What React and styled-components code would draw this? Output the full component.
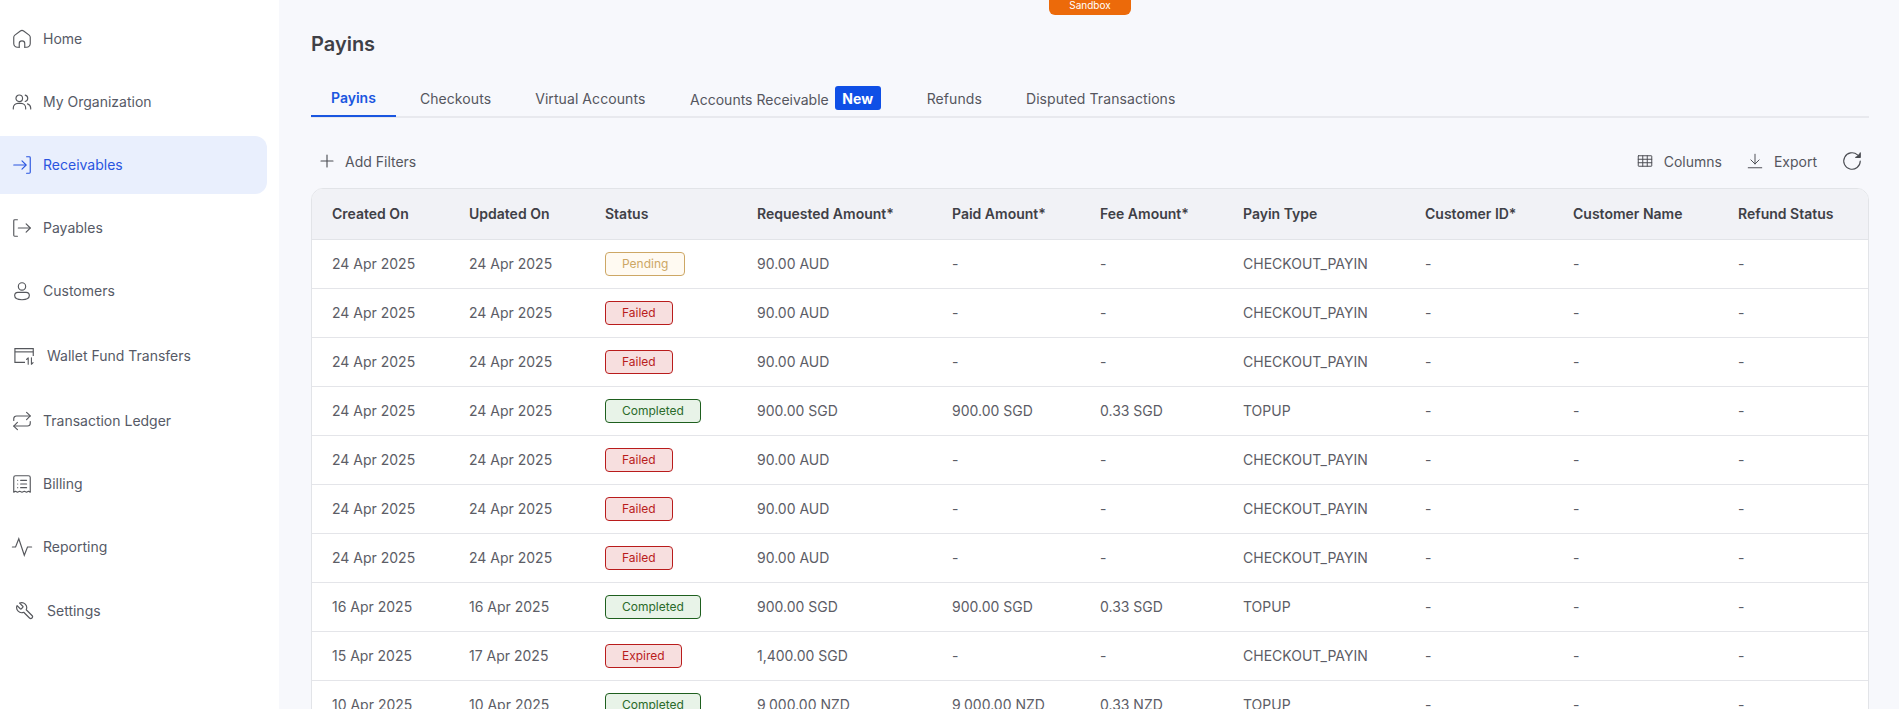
import React from "react";
import styled, { createGlobalStyle } from "styled-components";

const GlobalStyle = createGlobalStyle`
  html, body {
    margin: 0;
    padding: 0;
    height: 100%;
    overflow: hidden;
    font-family: "Inter", "Liberation Sans", sans-serif;
    background: #f7f8fc;
  }
  * {
    box-sizing: border-box;
  }
`;

const Layout = styled.div`
  display: flex;
  height: 100vh;
  overflow: hidden;
`;

const Sidebar = styled.aside`
  width: 279px;
  flex-shrink: 0;
  background: #ffffff;
  padding: 10px 12px 0 0;
  display: flex;
  flex-direction: column;
  gap: 5px;
`;

const NavItem = styled.div`
  height: ${(props) => props.$height || 58}px;
  display: flex;
  align-items: center;
  gap: ${(props) => props.$gap || 10}px;
  padding: 0 0 1px ${(props) => props.$pad || 11}px;
  font-size: 14px;
  color: ${(props) => (props.$active ? "#2a55e0" : "#565a66")};
  background: ${(props) => (props.$active ? "#e9effd" : "transparent")};
  border-radius: ${(props) => (props.$active ? "0 12px 12px 0" : "0")};
  svg {
    flex-shrink: 0;
    color: ${(props) => (props.$active ? "#2a55e0" : "#55575c")};
  }
`;

const Main = styled.main`
  flex: 1;
  min-width: 0;
  padding: 0 30px 0 32px;
  position: relative;
`;

const SandboxTag = styled.div`
  position: absolute;
  top: 0;
  left: 770px;
  width: 82px;
  height: 15px;
  background: #ec6a0a;
  color: #ffffff;
  font-size: 10px;
  line-height: 10px;
  text-align: center;
  border-radius: 0 0 6px 6px;
`;

const Title = styled.h1`
  margin: 0;
  padding-top: 32px;
  font-size: 20px;
  line-height: 24px;
  font-weight: 600;
  color: #3f4046;
`;

const Tabs = styled.div`
  display: flex;
  align-items: center;
  height: 38px;
  margin-top: 24px;
  border-bottom: 2px solid #e8e9ee;
`;

const Tab = styled.div`
  height: 38px;
  display: flex;
  align-items: center;
  padding: ${(props) => (props.$active ? "0" : "2px")} 20px 0;
  margin-right: ${(props) => props.$gap || 0}px;
  font-size: 14px;
  letter-spacing: ${(props) => (props.$active ? "0" : "0.08px")};
  font-weight: ${(props) => (props.$active ? 600 : 400)};
  color: ${(props) => (props.$active ? "#1a56e0" : "#55565e")};
  border-bottom: 2px solid ${(props) => (props.$active ? "#1a56e0" : "transparent")};
`;

const TabLabel = styled.span`
  padding-top: 2px;
  letter-spacing: 0;
`;

const NewBadge = styled.span`
  height: 24px;
  width: 46px;
  margin-left: 6px;
  display: flex;
  align-items: center;
  justify-content: center;
  background: #0f4fe6;
  color: #ffffff;
  font-size: 14px;
  font-weight: 700;
  letter-spacing: 0;
  border-radius: 3px;
`;

const Toolbar = styled.div`
  display: flex;
  align-items: center;
  justify-content: space-between;
  height: 70px;
  padding-top: 16px;
`;

const ToolGroup = styled.div`
  display: flex;
  align-items: center;
  gap: 24px;
`;

const ToolButton = styled.div`
  display: flex;
  align-items: center;
  gap: ${(props) => props.$gap || 10}px;
  font-size: 14px;
  color: #55565e;
  margin-left: ${(props) => props.$left || 0}px;
  margin-right: ${(props) => props.$right || 0}px;
  svg {
    color: #4a4c52;
  }
`;

const Card = styled.div`
  border: 1px solid #e2e4e8;
  border-radius: 12px 12px 0 0;
  overflow: hidden;
  background: #ffffff;
`;

const Table = styled.table`
  width: 100%;
  table-layout: fixed;
  border-collapse: collapse;
`;

const HeadCell = styled.th`
  height: 50px;
  padding: 0 0 0 20px;
  background: #f1f2f6;
  border-bottom: 1px solid #e2e4e8;
  font-size: 14px;
  font-weight: 600;
  color: #3f4046;
  text-align: left;
  white-space: nowrap;
`;

const Cell = styled.td`
  height: 49px;
  padding: 0 0 0 20px;
  border-bottom: 1px solid #e4e5e9;
  font-size: 14px;
  color: #5c5d66;
  white-space: nowrap;
`;

const badgeColors = {
  Pending: { bg: "#fffaf2", border: "#cda765", text: "#cda765" },
  Failed: { bg: "#f7dfdf", border: "#b91c1c", text: "#b91c1c" },
  Expired: { bg: "#f7dfdf", border: "#b91c1c", text: "#b91c1c" },
  Completed: { bg: "#e8f3e8", border: "#1e5f1e", text: "#2a6a2a" },
};

const Status = styled.span`
  display: inline-flex;
  align-items: center;
  height: 24px;
  padding: 0 16px;
  font-size: 12px;
  border-radius: 4px;
  border: 1px solid ${(props) => badgeColors[props.$kind].border};
  background: ${(props) => badgeColors[props.$kind].bg};
  color: ${(props) => badgeColors[props.$kind].text};
`;

const Icon = ({ size = 22, sw = 1.25, children }) => (
  <svg
    width={size}
    height={size}
    viewBox="0 0 24 24"
    fill="none"
    stroke="currentColor"
    strokeWidth={sw}
    strokeLinecap="round"
    strokeLinejoin="round"
  >
    {children}
  </svg>
);

const icons = {
  home: (
    <Icon>
      <path d="M9 21H7a4 4 0 0 1-4-4v-6.800a3 3 0 0 1 1.200-2.400l6-4.500a3 3 0 0 1 3.600 0l6 4.500a3 3 0 0 1 1.200 2.400V17a4 4 0 0 1-4 4h-2" />
      <path d="M9 21v-4a3 3 0 0 1 6 0v4" />
    </Icon>
  ),
  users: (
    <Icon>
      <path d="M2.500 19.500v-1a5 5 0 0 1 5-5h3.500a5 5 0 0 1 5 5v1" />
      <circle cx="9" cy="8" r="3.600" />
      <path d="M15.500 4.500a3.600 3.600 0 0 1 0 7" />
      <path d="M21.500 19.500v-1a5 5 0 0 0-3.500-4.500" />
    </Icon>
  ),
  receive: (
    <Icon>
      <path d="M3 12h13" />
      <path d="M12 7.500l4.500 4.500-4.500 4.500" />
      <path d="M17 3h3a1 1 0 0 1 1 1v16a1 1 0 0 1-1 1h-3" />
    </Icon>
  ),
  pay: (
    <Icon>
      <path d="M7 3H4a1 1 0 0 0-1 1v16a1 1 0 0 0 1 1h3" />
      <path d="M8 12h13" />
      <path d="M16.500 7.500L21 12l-4.500 4.500" />
    </Icon>
  ),
  customer: (
    <Icon>
      <circle cx="12" cy="7" r="4" />
      <path d="M7.500 13.500h9a3.500 3.500 0 0 1 3.500 3.500c0 2.500-3 4.500-8 4.500s-8-2-8-4.500a3.500 3.500 0 0 1 3.500-3.500z" />
    </Icon>
  ),
  wallet: (
    <Icon>
      <path d="M12 19H1V4h20v8" strokeLinejoin="miter" strokeLinecap="butt" />
      <path d="M1 7.500h20" strokeLinecap="butt" />
      <path d="M15.500 21v-7l-1.800 1.800M19 14v7l1.800-1.800" strokeWidth="1.200" />
    </Icon>
  ),
  ledger: (
    <Icon>
      <path d="M17 2.500l4 4-4 4" />
      <path d="M3 11.500v-2a3 3 0 0 1 3-3h15" />
      <path d="M7 21.500l-4-4 4-4" />
      <path d="M21 12.500v2a3 3 0 0 1-3 3H3" />
    </Icon>
  ),
  billing: (
    <Icon>
      <path d="M3 21V5a2 2 0 0 1 2-2h14a2 2 0 0 1 2 2v16l-2-1-2 1-2.500-1-2.500 1-2.500-1-2.500 1-2-1z" />
      <path d="M10.500 8H17M10.500 12H17M10.500 16H17" />
      <path d="M7.300 8h.01M7.300 12h.01M7.300 16h.01" />
    </Icon>
  ),
  reporting: (
    <Icon>
      <path d="M1.500 12H5l3.500-9 6 18 3.500-9h4.500" strokeLinejoin="miter" />
    </Icon>
  ),
  settings: (
    <Icon size={20} sw={1.4}>
      <path
        transform="translate(24 0) scale(-1 1)"
        d="M14.700 6.300a1 1 0 0 0 0 1.400l1.600 1.600a1 1 0 0 0 1.400 0l3.770-3.770a6 6 0 0 1-7.940 7.940l-6.910 6.910a2.120 2.120 0 0 1-3-3l6.910-6.910a6 6 0 0 1 7.940-7.940l-3.760 3.760z"
      />
    </Icon>
  ),
};

const navItems = [
  { label: "Home", icon: "home" },
  { label: "My Organization", icon: "users" },
  { label: "Receivables", icon: "receive", active: true },
  { label: "Payables", icon: "pay" },
  { label: "Customers", icon: "customer" },
  { label: "Wallet Fund Transfers", icon: "wallet", height: 62, pad: 14, gap: 11 },
  { label: "Transaction Ledger", icon: "ledger" },
  { label: "Billing", icon: "billing" },
  { label: "Reporting", icon: "reporting" },
  { label: "Settings", icon: "settings", height: 60, pad: 15, gap: 12 },
];

const columns = [
  { title: "Created On", width: 137 },
  { title: "Updated On", width: 136 },
  { title: "Status", width: 152 },
  { title: "Requested Amount*", width: 195 },
  { title: "Paid Amount*", width: 148 },
  { title: "Fee Amount*", width: 143 },
  { title: "Payin Type", width: 182 },
  { title: "Customer ID*", width: 148 },
  { title: "Customer Name", width: 165 },
  { title: "Refund Status", width: 150 },
];

const rows = [
  ["24 Apr 2025", "24 Apr 2025", "Pending", "90.00 AUD", "-", "-", "CHECKOUT_PAYIN"],
  ["24 Apr 2025", "24 Apr 2025", "Failed", "90.00 AUD", "-", "-", "CHECKOUT_PAYIN"],
  ["24 Apr 2025", "24 Apr 2025", "Failed", "90.00 AUD", "-", "-", "CHECKOUT_PAYIN"],
  ["24 Apr 2025", "24 Apr 2025", "Completed", "900.00 SGD", "900.00 SGD", "0.33 SGD", "TOPUP"],
  ["24 Apr 2025", "24 Apr 2025", "Failed", "90.00 AUD", "-", "-", "CHECKOUT_PAYIN"],
  ["24 Apr 2025", "24 Apr 2025", "Failed", "90.00 AUD", "-", "-", "CHECKOUT_PAYIN"],
  ["24 Apr 2025", "24 Apr 2025", "Failed", "90.00 AUD", "-", "-", "CHECKOUT_PAYIN"],
  ["16 Apr 2025", "16 Apr 2025", "Completed", "900.00 SGD", "900.00 SGD", "0.33 SGD", "TOPUP"],
  ["15 Apr 2025", "17 Apr 2025", "Expired", "1,400.00 SGD", "-", "-", "CHECKOUT_PAYIN"],
  ["10 Apr 2025", "10 Apr 2025", "Completed", "9,000.00 NZD", "9,000.00 NZD", "0.33 NZD", "TOPUP"],
];

const App = () => {
  return (
    <Layout>
      <GlobalStyle />
      <Sidebar>
        {navItems.map((item) => (
          <NavItem
            key={item.label}
            $active={item.active}
            $height={item.height}
            $pad={item.pad}
            $gap={item.gap}
          >
            {icons[item.icon]}
            {item.label}
          </NavItem>
        ))}
      </Sidebar>
      <Main>
        <SandboxTag>Sandbox</SandboxTag>
        <Title>Payins</Title>
        <Tabs>
          <Tab $active $gap={4}>Payins</Tab>
          <Tab $gap={4}>Checkouts</Tab>
          <Tab $gap={4.6}>Virtual Accounts</Tab>
          <Tab $gap={6}>
            <TabLabel>Accounts Receivable</TabLabel>
            <NewBadge>New</NewBadge>
          </Tab>
          <Tab $gap={4}>Refunds</Tab>
          <Tab>Disputed Transactions</Tab>
        </Tabs>
        <Toolbar>
          <ToolButton $left={7} $gap={9}>
            <Icon size={18} sw={1.5}>
              <path d="M12 4v16M4 12h16" />
            </Icon>
            Add Filters
          </ToolButton>
          <ToolGroup>
            <ToolButton>
              <Icon size={18} sw={1.3}>
                <rect x="3" y="5" width="18" height="14" rx="0.500" />
                <path d="M3 9.700h18M3 14.300h18M9 5v14M15 5v14" />
              </Icon>
              Columns
            </ToolButton>
            <ToolButton>
              <Icon size={18} sw={1.3}>
                <path d="M12 3v13M6.500 10.500L12 16l5.500-5.500M3 21h18" />
              </Icon>
              Export
            </ToolButton>
            <ToolButton $right={6}>
              <Icon size={22} sw={1.25}>
                <path d="M21 12a9 9 0 1 1-3-6.700" />
                <path d="M21 3v5h-5" fill="currentColor" />
              </Icon>
            </ToolButton>
          </ToolGroup>
        </Toolbar>
        <Card>
          <Table>
            <colgroup>
              {columns.map((col) => (
                <col key={col.title} style={{ width: col.width }} />
              ))}
            </colgroup>
            <thead>
              <tr>
                {columns.map((col) => (
                  <HeadCell key={col.title}>{col.title}</HeadCell>
                ))}
              </tr>
            </thead>
            <tbody>
              {rows.map((row, i) => (
                <tr key={i}>
                  <Cell>{row[0]}</Cell>
                  <Cell>{row[1]}</Cell>
                  <Cell>
                    <Status $kind={row[2]}>{row[2]}</Status>
                  </Cell>
                  <Cell>{row[3]}</Cell>
                  <Cell>{row[4]}</Cell>
                  <Cell>{row[5]}</Cell>
                  <Cell>{row[6]}</Cell>
                  <Cell>-</Cell>
                  <Cell>-</Cell>
                  <Cell>-</Cell>
                </tr>
              ))}
            </tbody>
          </Table>
        </Card>
      </Main>
    </Layout>
  );
};

export default App;
